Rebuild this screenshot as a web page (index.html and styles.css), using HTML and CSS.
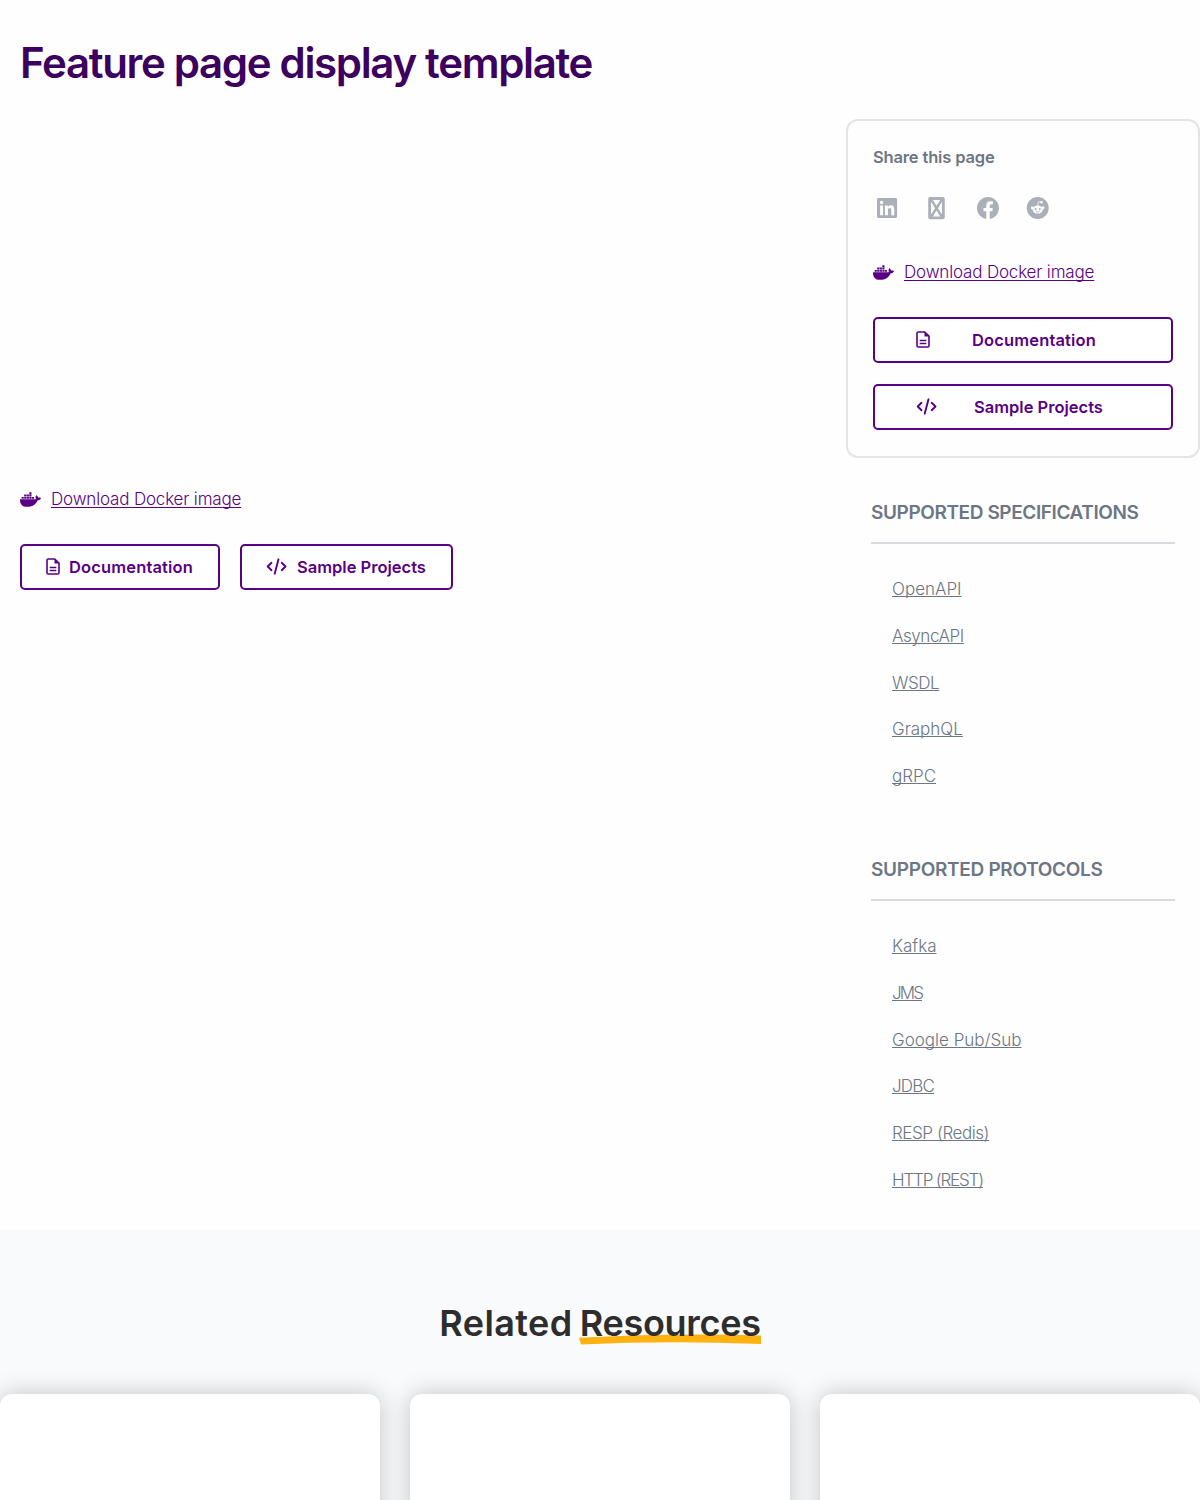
FILE: index.html
```html
<!DOCTYPE html>
<html lang="en">
<head>
<meta charset="utf-8">
<title>Feature page display template</title>
<link rel="stylesheet" href="styles.css">
</head>
<body>
<svg class="defs" width="0" height="0">
  <symbol id="docker" viewBox="0 0 640 512"><path d="M349.9 236.3h-66.1v-59.4h66.1v59.4zm0-204.3h-66.1v60.7h66.1V32zm78.2 144.8H362v59.4h66.1v-59.4zm-156.3-72.1h-66.1v60.1h66.1v-60.1zm78.1 0h-66.1v60.1h66.1v-60.1zm276.8 100c-14.4-9.7-47.6-13.2-73.1-8.4-3.3-24-16.7-44.9-41.1-63.7l-14-9.3-9.3 14c-18.4 27.8-23.4 73.6-3.7 103.8-8.7 4.7-25.8 11.1-48.4 10.7H2.4c-8.7 50.8 5.8 116.8 44 162.1 37.1 43.9 92.7 66.2 165.4 66.2 157.4 0 273.9-72.5 328.4-204.2 21.4.4 67.6.1 91.3-45.2 1.5-2.5 6.6-13.2 8.5-17.1l-13.3-8.9zm-511.1-27.9h-66v59.4h66.1v-59.4zm78.1 0h-66.1v59.4h66.1v-59.4zm78.1 0h-66.1v59.4h66.1v-59.4zm-78.1-72.1h-66.1v60.1h66.1v-60.1z"/></symbol>
  <symbol id="doc" viewBox="0 0 14 17"><path d="M2.3 1h6.4L13 5.2v9.5c0 .8-.5 1.3-1.3 1.3H2.3C1.500 16 1 15.500 1 14.700V2.300C1 1.500 1.500 1 2.300 1z" fill="none" stroke="currentColor" stroke-width="1.600"/><path d="M8.500 1v4.500H13z"/><path d="M3.700 9.500h6.600M3.700 12.500h6.600" stroke="currentColor" stroke-width="1.300"/></symbol>
  <symbol id="code" viewBox="0 0 22 17"><path d="M5.500 4.800L1.700 8.500l3.800 3.700M15.700 4.800l3.800 3.700-3.800 3.700M12.500 1.300L8.700 15.700" fill="none" stroke="currentColor" stroke-width="1.900" stroke-linecap="round" stroke-linejoin="round"/></symbol>
</svg>

<main class="page">
  <h1 class="title">Feature page display template</h1>
  <div class="columns">
    <div class="content">
      <a class="docker-link"><svg class="icon-docker"><use href="#docker"/></svg><span>Download Docker image</span></a>
      <div class="buttons">
        <a class="btn"><svg class="icon-doc"><use href="#doc"/></svg><span class="doc-label">Documentation</span></a>
        <a class="btn"><svg class="icon-code"><use href="#code"/></svg><span>Sample Projects</span></a>
      </div>
    </div>
    <aside class="sidebar">
      <div class="card">
        <p class="share-title">Share this page</p>
        <div class="share">
          <svg viewBox="0 0 24 24"><path transform="translate(2 .5) scale(.0449)" d="M416 32H31.900C14.300 32 0 46.500 0 64.300v383.400C0 465.500 14.300 480 31.900 480H416c17.600 0 32-14.500 32-32.300V64.300c0-17.800-14.400-32.300-32-32.300zM135.400 416H69V202.200h66.500V416zm-33.200-243c-21.300 0-38.500-17.300-38.500-38.500S80.900 96 102.200 96c21.200 0 38.500 17.300 38.500 38.500 0 21.300-17.200 38.500-38.500 38.500zm282.100 243h-66.400V312c0-24.800-.5-56.700-34.500-56.700-34.600 0-39.900 27-39.900 54.900V416h-66.400V202.200h63.700v29.200h.9c8.900-16.800 30.600-34.500 62.900-34.500 67.200 0 79.700 44.300 79.700 101.900V416z"/></svg>
          <svg viewBox="0 0 24 24"><path fill-rule="evenodd" d="M5.200 1h12.600a2 2 0 0 1 2 2v18.300a2 2 0 0 1-2 2H5.200a2 2 0 0 1-2-2V3a2 2 0 0 1 2-2zM7.800 3.900l3.700 5.800 3.700-5.800zM6 5.800v12.700l4-6.350zM17 5.800v12.700l-4-6.350zM7.800 20.400l3.700-5.800 3.700 5.800z"/></svg>
          <svg viewBox="0 0 24 24"><path transform="translate(1 1) scale(1.375)" d="M16 8.049c0-4.446-3.582-8.050-8-8.050C3.580 0-.002 3.603-.002 8.050c0 4.017 2.926 7.347 6.750 7.951v-5.625h-2.030V8.050H6.750V6.275c0-2.017 1.195-3.131 3.022-3.131.876 0 1.791.157 1.791.157v1.980h-1.009c-.993 0-1.303.621-1.303 1.258v1.510h2.218l-.354 2.326H9.250V16c3.824-.604 6.750-3.934 6.750-7.951"/></svg>
          <svg viewBox="0 0 24 24"><circle cx="11.700" cy="12" r="11"/><g class="knockout"><ellipse cx="11.700" cy="13.600" rx="5.100" ry="4"/><circle cx="6.400" cy="11.700" r="1.500"/><circle cx="17" cy="11.700" r="1.500"/><circle cx="15.500" cy="6.300" r="1.200"/><path d="M11.700 10l.9-4.300 2.900.6" fill="none" stroke="#fefefe" stroke-width=".7"/></g><circle cx="9.600" cy="12.900" r="1"/><circle cx="13.800" cy="12.900" r="1"/><path d="M9.600 15.300q2.100 1.500 4.200 0" fill="none" stroke="#abb0b8" stroke-width=".8"/></svg>
        </div>
        <a class="docker-link"><svg class="icon-docker"><use href="#docker"/></svg><span>Download Docker image</span></a>
        <div class="stack">
          <a class="btn wide"><svg class="icon-doc"><use href="#doc"/></svg><span class="doc-label">Documentation</span></a>
          <a class="btn wide"><svg class="icon-code"><use href="#code"/></svg><span>Sample Projects</span></a>
        </div>
      </div>
      <section class="support">
        <h2>SUPPORTED SPECIFICATIONS</h2>
        <ul>
          <li><a>OpenAPI</a></li>
          <li><a class="snug">AsyncAPI</a></li>
          <li><a class="snug">WSDL</a></li>
          <li><a>GraphQL</a></li>
          <li><a>gRPC</a></li>
        </ul>
      </section>
      <section class="support protocols">
        <h2>SUPPORTED PROTOCOLS</h2>
        <ul>
          <li><a>Kafka</a></li>
          <li><a class="tightest">JMS</a></li>
          <li><a>Google Pub/Sub</a></li>
          <li><a class="tight">JDBC</a></li>
          <li><a class="snug">RESP (Redis)</a></li>
          <li><a class="tighter">HTTP (REST)</a></li>
        </ul>
      </section>
    </aside>
  </div>
</main>

<section class="related">
  <h2><span class="plain">Related</span><span class="marked"><svg class="swash" viewBox="0 0 182 11" preserveAspectRatio="none"><path d="M0 4Q90-1.500 182 1.500V10.500Q90 6.500 2 11Z"/></svg><span class="word">Resources</span></span></h2>
  <div class="cards">
    <div class="tile"></div>
    <div class="tile"></div>
    <div class="tile"></div>
  </div>
</section>
</body>
</html>
```

FILE: styles.css
```css
* { box-sizing: border-box; }
body {
  margin: 0;
  height: 1500px;
  overflow: hidden;
  background: #fefefe;
  font-family: Inter, "Liberation Sans", sans-serif;
  font-size: 17px;
  color: #6c7684;
}
h1, h2, p, ul { margin: 0; padding: 0; }
svg { display: block; flex: none; fill: currentColor; }
.defs { position: absolute; }
.page { height: 1229px; }
.title {
  height: 119px;
  padding: 38px 0 0 20px;
  font-size: 42px;
  line-height: 50px;
  font-weight: 600;
  letter-spacing: -1.330px;
  color: #3c005f;
  white-space: nowrap;
}
.columns { display: grid; grid-template-columns: 846px 354px; }
.content { padding: 368px 0 0 20px; }
.docker-link {
  display: flex;
  align-items: center;
  gap: 10px;
  height: 24px;
  color: #590085;
  font-weight: 300;
  letter-spacing: -.17px;
}
.docker-link span, .support a {
  text-decoration: underline;
  text-decoration-thickness: 1px;
  text-underline-offset: 2px;
  text-decoration-skip-ink: none;
}
.icon-docker { width: 21px; height: 17px; margin-top: 1px; }
.icon-doc { width: 14px; height: 17px; }
.icon-code { width: 22px; height: 17px; }
.buttons { display: flex; gap: 20px; margin-top: 32.500px; }
.btn {
  display: flex;
  align-items: center;
  gap: 9px;
  height: 46.500px;
  padding: 0 25px 0 24px;
  border: 2px solid #590085;
  border-radius: 5px;
  color: #590085;
  background: #fff;
  font-size: 16.500px;
  font-weight: 600;
}
.doc-label { letter-spacing: .15px; }
.card {
  height: 339px;
  padding: 25px 25.500px 0 25px;
  border: 2px solid #e2e4e6;
  border-radius: 12px;
}
.share-title { font-size: 16.500px; line-height: 22px; font-weight: 600; letter-spacing: -.16px; }
.share { display: flex; gap: 26.500px; margin: 28px 0 39.500px 1.500px; color: #abb0b8; }
.share svg { width: 24px; height: 24px; }
.knockout { fill: #fefefe; }
.stack { display: grid; gap: 20.500px; margin-top: 33px; }
.wide { padding-left: 41px; gap: 42px; }
.wide:last-child { gap: 36px; }
.support { margin: 40px 25px 0; }
.support h2 {
  height: 46px;
  padding-top: 2px;
  border-bottom: 2px solid #d9dbe1;
  font-size: 19px;
  line-height: 26px;
  font-weight: 600;
  letter-spacing: -.4px;
  white-space: nowrap;
}
.protocols h2 { letter-spacing: -.3px; }
.support ul { list-style: none; padding: 22px 0 0 21px; }
.support li { height: 46.800px; line-height: 46.800px; font-weight: 300; }
.support a { text-underline-offset: 1px; }
.protocols { margin-top: 55px; }
.snug { letter-spacing: -.44px; }
.tight { letter-spacing: -.8px; }
.tighter { letter-spacing: -1.180px; }
.tightest { letter-spacing: -1.900px; }
.related { height: 271px; background: #f9fafc; padding-top: 70px; overflow: hidden; }
.related h2 {
  display: flex;
  justify-content: center;
  gap: 7px;
  font-size: 36px;
  line-height: 48px;
  font-weight: 600;
  color: #2d2d2d;
}
.plain { letter-spacing: .4px; }
.marked { position: relative; letter-spacing: -.29px; }
.word { position: relative; }
.swash { position: absolute; left: -1px; top: 35px; width: 182px; height: 10.500px; fill: #ffb210; }
.cards { display: grid; grid-template-columns: repeat(3, 1fr); gap: 30px; margin-top: 47px; }
.tile {
  height: 300px;
  border-radius: 12px;
  background: #fff;
  box-shadow: 0 0 24px rgba(0, 0, 0, .22);
}
```
